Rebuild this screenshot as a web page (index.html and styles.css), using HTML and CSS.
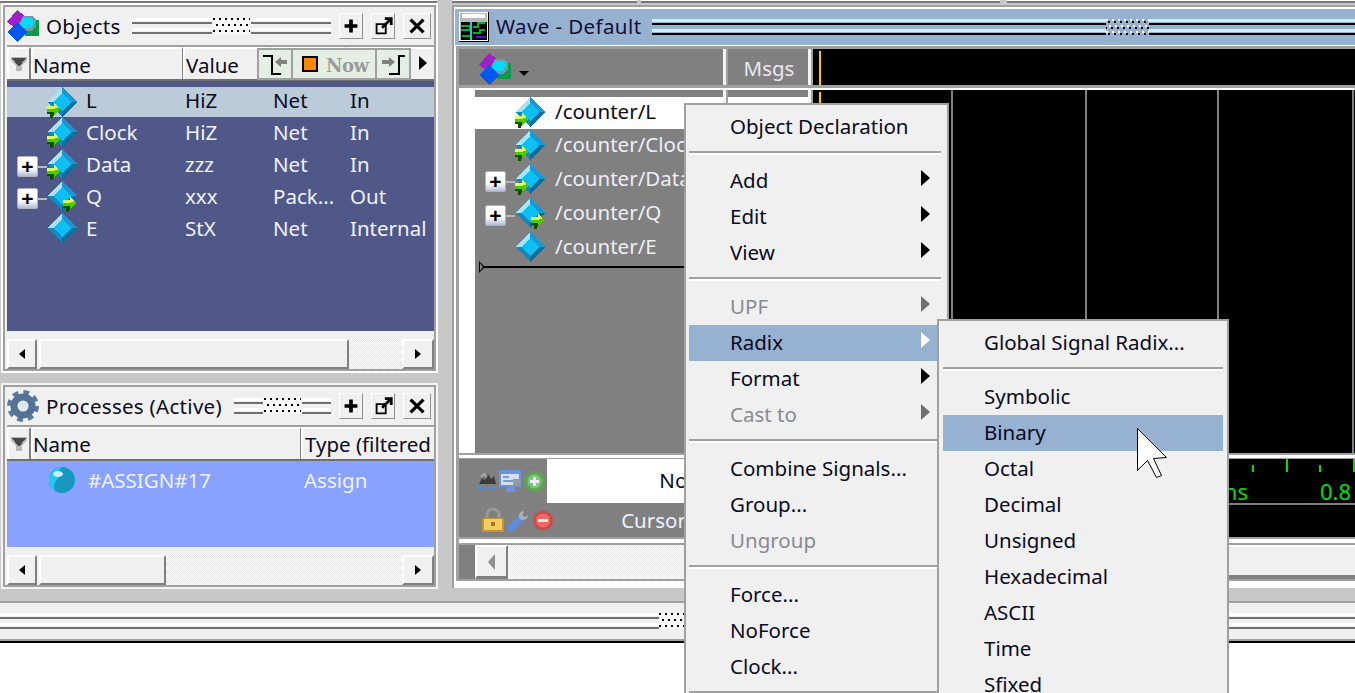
FILE: index.html
```html
<!DOCTYPE html>
<html lang="en">
<head>
  <meta charset="UTF-8" />
  <title>Wave - Default</title>
  <link rel="stylesheet" href="styles.css">
</head>
<body>

  <svg class="defs" aria-hidden="true">
    <symbol id="net" viewBox="0 0 30 30">
      <polygon points="15,0 0,15 15,15" fill="#a6e4f8"/>
      <polygon points="15,0 30,15 15,15" fill="#169ad6"/>
      <polygon points="30,15 15,30 15,15" fill="#07709e"/>
      <polygon points="0,15 15,30 15,15" fill="#1488bc"/>
      <polygon points="15,6 24,15 15,24 6,15" fill="#0cc0f6"/>
    </symbol>
    <symbol id="arrow" viewBox="0 0 14 15">
      <polygon points="0,3 7,3 7,0 14,6 7,12 7,9 0,9" fill="#50c800"/>
      <polygon points="0,3 7,3 7,0 12,4 7,6 0,6" fill="#d8ff60"/>
      <polygon points="0,9 7,9 7,12 6,13 6,15 3,15 3,11 0,11" fill="#0c5000"/>
    </symbol>
    <symbol id="objects" viewBox="0 0 32 32">
      <polygon points="0,12 10,0 18,6 8,18" fill="#a020c8"/>
      <rect x="18" y="10" width="14" height="16" fill="#0f9a48"/>
      <polygon points="16,6 26,6 29,10 29,17 24,21 14,21 11,16" fill="#6c9aa8"/>
      <polygon points="16,8 25,8 27,12 24,18 15,18 13,14" fill="#00dcff"/>
      <polygon points="10,12 20,22 10,32 0,22" fill="#0058f0"/>
    </symbol>
    <symbol id="plus" viewBox="0 0 24 26">
      <path d="M12 6v14M5 13h14" stroke="#000" stroke-width="4" fill="none"/>
    </symbol>
    <symbol id="popout" viewBox="0 0 24 26">
      <path d="M5 11h10v10H5z" stroke="#000" stroke-width="2" fill="none"/>
      <path d="M11 15l9-9M14 5h7v7" stroke="#000" stroke-width="3" fill="none"/>
    </symbol>
    <symbol id="close" viewBox="0 0 28 26">
      <path d="M7 6l14 14M21 6L7 20" stroke="#000" stroke-width="3.5" fill="none"/>
    </symbol>
    <symbol id="filter" viewBox="0 0 16 14">
      <polygon points="0,0 16,0 16,3 11,9 11,14 5,14 5,9 0,3" fill="#b8b8b8"/>
      <polygon points="1,1 15,1 8,10" fill="#484848"/>
    </symbol>
  </svg>

  <div class="topline">
    <div class="seg seg-left"></div>
    <div class="seg seg-mid"></div>
    <div class="seg seg-wide"></div>
    <div class="seg seg-last"></div>
  </div>

  <div class="workspace">
    <div class="left-col">

      <section class="pane pane-objects">
        <div class="pane-title">
          <svg class="title-icon"><use href="#objects"/></svg>
          <span class="title-text">Objects</span>
          <div class="grip grip-objects"><i class="grip-lines"></i><i class="grip-dots"></i><i class="grip-lines"></i></div>
          <div class="title-btns">
            <button class="bevel-btn"><svg><use href="#plus"/></svg></button>
            <button class="bevel-btn"><svg><use href="#popout"/></svg></button>
            <button class="bevel-btn btn-close"><svg><use href="#close"/></svg></button>
          </div>
        </div>
        <div class="col-head">
          <div class="col col-filter"><svg class="filter-icon"><use href="#filter"/></svg></div>
          <div class="col col-name">Name</div>
          <div class="col col-value">Value</div>
          <div class="col col-kind"></div>
          <div class="col col-rest"></div>
          <div class="now-tools">
            <div class="tool">
              <svg width="24" height="20" viewBox="0 0 24 20"><path d="M0 1h9v18h9" stroke="#000" stroke-width="2" fill="none"/><polygon points="12,7 18,2 18,5 24,5 24,9 18,9 18,12" fill="#808080"/></svg>
            </div>
            <div class="tool tool-now"><span class="now-box"></span><span class="now-label">Now</span></div>
            <div class="tool">
              <svg width="24" height="20" viewBox="0 0 24 20"><path d="M24 1h-6v18H8" stroke="#000" stroke-width="2" fill="none"/><polygon points="14,7 8,2 8,5 1,5 1,9 8,9 8,12" fill="#808080"/></svg>
            </div>
          </div>
          <span class="head-more"></span>
        </div>
        <div class="obj-list">
          <div class="obj-row obj-first selected">
            <div class="tree"><svg class="net"><use href="#net"/></svg><svg class="arrow-in"><use href="#arrow"/></svg></div>
            <span class="name">L</span><span class="val">HiZ</span><span class="kind">Net</span><span>In</span>
          </div>
          <div class="obj-row">
            <div class="tree"><svg class="net"><use href="#net"/></svg><svg class="arrow-in"><use href="#arrow"/></svg></div>
            <span class="name">Clock</span><span class="val">HiZ</span><span class="kind">Net</span><span>In</span>
          </div>
          <div class="obj-row">
            <div class="tree has-exp"><span class="exp">+</span><i class="exp-line"></i><svg class="net"><use href="#net"/></svg><svg class="arrow-in arrow-exp"><use href="#arrow"/></svg></div>
            <span class="name">Data</span><span class="val">zzz</span><span class="kind">Net</span><span>In</span>
          </div>
          <div class="obj-row">
            <div class="tree has-exp"><span class="exp">+</span><i class="exp-line"></i><svg class="net"><use href="#net"/></svg><svg class="arrow-out arrow-exp"><use href="#arrow"/></svg></div>
            <span class="name">Q</span><span class="val">xxx</span><span class="kind">Pack...</span><span>Out</span>
          </div>
          <div class="obj-row">
            <div class="tree"><svg class="net"><use href="#net"/></svg></div>
            <span class="name">E</span><span class="val">StX</span><span class="kind">Net</span><span>Internal</span>
          </div>
        </div>
        <div class="scroll">
          <button class="scroll-btn"><i class="tri-left"></i></button>
          <div class="thumb thumb-objects"></div>
          <div class="trough"></div>
          <button class="scroll-btn"><i class="tri-right"></i></button>
        </div>
      </section>

      <section class="pane pane-procs">
        <div class="pane-title">
          <svg class="title-icon" viewBox="0 0 32 32">
            <circle cx="16" cy="16" r="13.5" fill="none" stroke="#5a7a9c" stroke-width="5" stroke-dasharray="5.6 5"/>
            <circle cx="16" cy="16" r="9" fill="none" stroke="#527396" stroke-width="7"/>
            <circle cx="16" cy="16" r="4.5" fill="#dfe6ee"/>
          </svg>
          <span class="title-text">Processes (Active)</span>
          <div class="grip grip-procs"><i class="grip-lines"></i><i class="grip-dots"></i><i class="grip-lines"></i></div>
          <div class="title-btns">
            <button class="bevel-btn"><svg><use href="#plus"/></svg></button>
            <button class="bevel-btn"><svg><use href="#popout"/></svg></button>
            <button class="bevel-btn btn-close"><svg><use href="#close"/></svg></button>
          </div>
        </div>
        <div class="col-head">
          <div class="col col-filter"><svg class="filter-icon"><use href="#filter"/></svg></div>
          <div class="col col-pname">Name</div>
          <div class="col col-type">Type (filtered</div>
        </div>
        <div class="proc-list">
          <div class="proc-row">
            <svg class="proc-icon" viewBox="0 0 26 26">
              <circle cx="13" cy="13" r="13" fill="#1898c0"/>
              <path d="M13 0a13 13 0 0 0-13 13 13 13 0 0 0 6 11 13 13 0 0 1 3-13 12 12 0 0 1 4-11z" fill="#22c8f4"/>
              <ellipse cx="9" cy="7" rx="5" ry="3" fill="#c8f2ff"/>
            </svg>
            <span class="proc-name">#ASSIGN#17</span>
            <span>Assign</span>
          </div>
        </div>
        <div class="scroll">
          <button class="scroll-btn"><i class="tri-left"></i></button>
          <div class="thumb thumb-procs"></div>
          <div class="trough"></div>
          <button class="scroll-btn"><i class="tri-right"></i></button>
        </div>
      </section>
    </div>

    <section class="wave-pane">
      <div class="wave-title">
        <svg class="wave-icon" viewBox="0 0 30 30">
          <rect width="30" height="30" fill="#000"/>
          <rect width="29" height="29" fill="#fff"/>
          <rect x="1" y="1" width="27" height="27" fill="#b8b8b8"/>
          <rect x="3" y="2" width="23" height="4" fill="#fff"/>
          <rect x="2" y="10" width="26" height="18" fill="#000"/>
          <path d="M2 14h9v4H2M14 15h5v-4h7M14 21h7v-3h5M3 24h8" stroke="#00b030" stroke-width="2" fill="none"/>
          <rect x="11" y="10" width="2" height="18" fill="#10d0d0"/>
          <rect x="17" y="24" width="10" height="2" fill="#5010d0"/>
        </svg>
        <span class="title-text wave-title-text">Wave - Default</span>
        <div class="grip grip-wave"><i class="grip-lines grip-first"></i><i class="grip-dots"></i><i class="grip-lines"></i></div>
      </div>

      <div class="wave-body">
        <div class="wave-head">
          <div class="head-names">
            <svg class="head-icon"><use href="#objects"/></svg>
            <i class="caret"></i>
          </div>
          <i class="split"></i>
          <div class="head-msgs">Msgs</div>
          <i class="split"></i>
          <div class="head-wave"></div>
        </div>
        <div class="hsplit"></div>

        <div class="wave-main">
          <div class="sig-gutter"></div>
          <div class="sig-list">
            <div class="sig-row sig-first">
              <div class="sig-tree"><svg class="net"><use href="#net"/></svg><svg class="arrow-in"><use href="#arrow"/></svg></div>
              <span>/counter/L</span>
            </div>
            <div class="sig-row">
              <div class="sig-tree"><svg class="net"><use href="#net"/></svg><svg class="arrow-in"><use href="#arrow"/></svg></div>
              <span>/counter/Clock</span>
            </div>
            <div class="sig-row">
              <div class="sig-tree has-exp"><span class="exp">+</span><i class="exp-line"></i><svg class="net"><use href="#net"/></svg><svg class="arrow-in arrow-exp"><use href="#arrow"/></svg></div>
              <span>/counter/Data</span>
            </div>
            <div class="sig-row">
              <div class="sig-tree has-exp"><span class="exp">+</span><i class="exp-line"></i><svg class="net"><use href="#net"/></svg><svg class="arrow-out arrow-exp"><use href="#arrow"/></svg></div>
              <span>/counter/Q</span>
            </div>
            <div class="sig-row">
              <div class="sig-tree"><svg class="net"><use href="#net"/></svg></div>
              <span>/counter/E</span>
            </div>
            <div class="insert-line"></div>
          </div>
          <i class="split"></i>
          <div class="msg-col"></div>
          <i class="split"></i>
          <div class="wave-canvas">
            <div class="grid-col grid-a"></div>
            <div class="grid-col grid-b"></div>
            <div class="grid-col grid-c"></div>
            <div class="grid-col grid-d"></div>
          </div>
        </div>
        <div class="hsplit hsplit-low"></div>

        <div class="now-row">
          <div class="now-icons">
            <svg width="20" height="20" viewBox="0 0 20 20">
              <path d="M2 13l3-6 3 2 3-6 3 5 3-3 2 8z" fill="#3c3c3c"/><path d="M4 6l3-3 3 3" stroke="#aaa" stroke-width="2" fill="none"/>
              <path d="M1 17h18M1 17l3-2M1 17l3 2M19 17l-3-2M19 17l-3 2" stroke="#4a90e0" stroke-width="1.5" fill="none"/>
            </svg>
            <svg width="23" height="22" viewBox="0 0 23 22">
              <rect width="22" height="17" fill="#6c94d8"/><rect x="2" y="4" width="18" height="11" fill="#d4deec"/>
              <path d="M4 7h6M4 11h10" stroke="#7c9ccc" stroke-width="2"/><rect x="14" y="9" width="7" height="6" fill="#999"/><rect x="7" y="17" width="9" height="5" fill="#6c94d8"/>
            </svg>
            <svg width="21" height="21" viewBox="0 0 21 21">
              <circle cx="10.5" cy="10.5" r="10.5" fill="#5aa452"/><circle cx="10.5" cy="10.5" r="7" fill="#7cc874"/>
              <path d="M10.5 6v9M6 10.5h9" stroke="#eef" stroke-width="3"/>
            </svg>
          </div>
          <div class="now-value">Now</div>
          <i class="split"></i>
          <div class="msg-col"></div>
          <i class="split"></i>
          <div class="timeline">
            <span class="tick-label label-a">0.6 ns</span>
            <span class="tick-label label-b">0.8</span>
          </div>
        </div>

        <div class="cursor-row">
          <div class="cursor-icons">
            <svg width="22" height="24" viewBox="0 0 22 24">
              <path d="M5 11V6a6 5 0 0 1 12 0v5" stroke="#999" stroke-width="3" fill="none"/>
              <rect y="10" width="22" height="14" fill="#c89430"/><rect x="2" y="11" width="18" height="11" fill="#f4cc60"/><rect x="9" y="14" width="4" height="4" fill="#a07820"/>
            </svg>
            <svg width="23" height="23" viewBox="0 0 23 23">
              <path d="M3 20L13 10" stroke="#5c8ce0" stroke-width="7" stroke-linecap="round"/>
              <path d="M13 10a5 5 0 0 1 3-8l1 1-2 3 3 2 3-2a5 5 0 0 1-8 4z" fill="#b0b0b0"/>
            </svg>
            <svg width="20" height="21" viewBox="0 0 20 21">
              <circle cx="10" cy="10.5" r="10" fill="#c84c48"/><circle cx="10" cy="10.5" r="7" fill="#f06a64"/><rect x="5" y="9" width="10" height="3" fill="#ffe8e8"/>
            </svg>
          </div>
          <div class="cursor-label">Cursor 1</div>
          <i class="split"></i>
          <div class="msg-col msg-grey"></div>
          <i class="split"></i>
          <div class="cursor-wave"></div>
        </div>
        <div class="hsplit hsplit-scroll"></div>

        <div class="wave-scroll">
          <div class="wave-scroll-pad"></div>
          <button class="scroll-btn wave-scroll-btn"><i class="tri-left tri-off"></i></button>
          <div class="trough wave-trough"></div>
          <div class="thumb wave-thumb"></div>
        </div>
      </div>
    </section>
  </div>

  <div class="status-grip">
    <div class="grip"><i class="grip-lines"></i><i class="grip-dots"></i><i class="grip-lines"></i></div>
  </div>
  <div class="status-white"></div>

  <!-- context menu -->
  <nav class="menu menu-main">
    <div class="menu-item">Object Declaration</div>
    <div class="menu-sep"></div>
    <div class="menu-item">Add<i class="sub-arrow"></i></div>
    <div class="menu-item">Edit<i class="sub-arrow"></i></div>
    <div class="menu-item">View<i class="sub-arrow"></i></div>
    <div class="menu-sep"></div>
    <div class="menu-item disabled">UPF<i class="sub-arrow"></i></div>
    <div class="menu-item active">Radix<i class="sub-arrow"></i></div>
    <div class="menu-item">Format<i class="sub-arrow"></i></div>
    <div class="menu-item disabled">Cast to<i class="sub-arrow"></i></div>
    <div class="menu-sep"></div>
    <div class="menu-item">Combine Signals...</div>
    <div class="menu-item">Group...</div>
    <div class="menu-item disabled">Ungroup</div>
    <div class="menu-sep"></div>
    <div class="menu-item">Force...</div>
    <div class="menu-item">NoForce</div>
    <div class="menu-item">Clock...</div>
    <div class="menu-sep"></div>
  </nav>

  <nav class="menu menu-radix">
    <div class="menu-item">Global Signal Radix...</div>
    <div class="menu-sep"></div>
    <div class="menu-item">Symbolic</div>
    <div class="menu-item active">Binary</div>
    <div class="menu-item">Octal</div>
    <div class="menu-item">Decimal</div>
    <div class="menu-item">Unsigned</div>
    <div class="menu-item">Hexadecimal</div>
    <div class="menu-item">ASCII</div>
    <div class="menu-item">Time</div>
    <div class="menu-item">Sfixed</div>
  </nav>

  <svg class="mouse" width="31" height="51" viewBox="0 0 31 51">
    <polygon points="0.5,0.5 29.5,29.5 16.5,30.5 24.5,47.5 19.5,49.5 10.5,32.5 0.5,42.5" fill="#fff" stroke="#000"/>
  </svg>

</body>
</html>
```

FILE: styles.css
```css
* {
  box-sizing: border-box;
}

html, body {
  margin: 0;
  padding: 0;
}

body {
  position: relative;
  width: 1355px;
  height: 693px;
  overflow: hidden;
  background-color: #c8c8c8;
  color: #0a0a20;
  font-family: 'Noto Sans', 'Open Sans', sans-serif;
  font-size: 20.5px;
  line-height: 1;
}

i {
  display: block;
  font-style: normal;
}

button {
  padding: 0;
  font: inherit;
}

svg {
  flex: none;
}

.defs {
  position: absolute;
  width: 0;
  height: 0;
}

/* top edge */
.topline {
  display: flex;
  height: 3px;
}

.seg {
  background-color: #fff;
  border-bottom: 2px solid #777;
}

.seg-left { width: 437px; margin-right: 15px; }
.seg-mid { width: 185px; margin-right: 4px; }
.seg-wide { width: 359px; margin-right: 7px; }
.seg-last { width: 348px; }

.workspace {
  display: flex;
  height: 598px;
  padding-top: 2px;
}

.left-col {
  flex: none;
  width: 452px;
  padding-left: 3px;
}

/* docked panes */
.pane {
  display: flex;
  flex-direction: column;
  width: 433px;
  padding: 0 0 0 2px;
  border: 2px solid #a0a0a0;
  outline: 2px solid #fff;
  background-color: #f0f0f0;
}

.pane-objects { height: 366px; }
.pane-procs { height: 202px; margin-top: 14px; outline-color: #f4f4f4; }

.pane-title {
  display: flex;
  flex: none;
  align-items: center;
  height: 38px;
}

.title-icon {
  flex: none;
  width: 32px;
  height: 32px;
  shape-rendering: crispEdges;
}

.pane-procs .title-icon { shape-rendering: auto; }

.title-text {
  margin-left: 7px;
  letter-spacing: 0.3px;
  white-space: nowrap;
}

.title-btns {
  display: flex;
  gap: 8px;
  margin: 0 3px 0 8px;
}

.bevel-btn {
  width: 24px;
  height: 26px;
  border: 1px solid;
  border-color: #fff #909090 #909090 #fff;
  background-color: #f0f0f0;
}

.bevel-btn svg {
  display: block;
  width: 22px;
  height: 24px;
}

.btn-close { width: 28px; }
.btn-close svg { width: 26px; }

/* dotted drag handle */
.grip {
  display: flex;
  flex: 1;
  align-items: stretch;
  height: 16px;
}

.grip-lines {
  flex: 1;
  background: linear-gradient(#fff 0 3px, #f0f0f0 3px 4px, #707070 4px 6px, #f0f0f0 6px 10px, #fff 10px 13px, #f0f0f0 13px 14px, #707070 14px 16px);
}

.grip-dots {
  flex: none;
  width: 37px;
  background:
    conic-gradient(at 2px 2px, transparent 75%, #000 0) 0 0 / 6px 12px,
    conic-gradient(at 2px 2px, transparent 75%, #000 0) 3px 6px / 6px 12px,
    #f8f8f8;
}

.grip-objects { margin-left: 11px; }
.grip-objects .grip-dots { margin: 0 1px; }
.grip-procs { margin-left: 12px; }
.grip-procs .grip-dots { margin: 0 1px; }

/* column header */
.col-head {
  position: relative;
  display: flex;
  flex: none;
  height: 36px;
  border-top: 2px solid #a0a0a0;
  border-bottom: 2px solid #707070;
}

.col {
  display: flex;
  align-items: center;
  height: 32px;
  padding-top: 3px;
  border-top: 2px solid #fff;
  border-left: 2px solid #fff;
  border-right: 1px solid #808080;
  white-space: nowrap;
}

.col-filter { width: 24px; padding: 0 0 0 2px; border-right-width: 2px; }
.col-name { width: 152px; }
.col-value { width: 87px; padding-left: 1px; }
.col-kind { width: 76px; }
.col-rest { flex: 1; border-right: 0; }
.col-pname { width: 270px; padding-top: 1px; }
.col-type { flex: 1; border-right: 0; padding: 1px 0 0 2px; overflow: hidden; }

.filter-icon {
  width: 16px;
  height: 14px;
  shape-rendering: crispEdges;
}

.now-tools {
  position: absolute;
  top: 1px;
  left: 250px;
  display: flex;
  width: 154px;
  height: 32px;
  border: 2px solid #a0a0a0;
  background-color: #a0a0a0;
  gap: 2px;
}

.tool {
  display: flex;
  align-items: center;
  justify-content: center;
  width: 32px;
  padding-top: 1px;
  background-color: #e4eee4;
}

.tool-now {
  flex: 1;
  justify-content: flex-start;
  padding: 0 0 0 9px;
}

.now-box {
  width: 16px;
  height: 16px;
  border: 2px solid #000;
  background-color: #ff8800;
}

.now-label {
  margin-left: 8px;
  padding-top: 3px;
  color: #9a9a9a;
  font-family: 'DejaVu Serif', 'Liberation Serif', serif;
  font-size: 18px;
  font-weight: bold;
  letter-spacing: -0.5px;
}

.head-more {
  position: absolute;
  top: 9px;
  left: 412px;
  border-left: 8px solid #000;
  border-top: 7px solid transparent;
  border-bottom: 7px solid transparent;
}

/* object list */
.obj-list {
  flex: 1;
  padding-top: 6px;
  background-color: #50588a;
  color: #f0f2ff;
}

.obj-row {
  display: grid;
  grid-template-columns: 79px 99px 88px 77px auto;
  align-items: center;
  height: 32px;
  padding-bottom: 2px;
  white-space: nowrap;
}

.obj-first {
  height: 30px;
  padding-bottom: 0;
}

.obj-first > span {
  margin-top: -4px;
}

.selected {
  background-color: #bccbd9;
  color: #0a0a20;
}

.tree {
  position: relative;
  display: flex;
  align-items: center;
  padding-left: 40px;
}

.tree.has-exp { padding-left: 10px; }

.net {
  flex: none;
  width: 30px;
  height: 30px;
  shape-rendering: crispEdges;
}

.arrow-in,
.arrow-out {
  position: absolute;
  top: 16px;
  width: 14px;
  height: 15px;
  shape-rendering: crispEdges;
}

.tree .arrow-in { left: 40px; }
.tree .arrow-out { left: 56px; }

.exp {
  display: flex;
  flex: none;
  align-items: center;
  justify-content: center;
  width: 21px;
  height: 21px;
  margin-top: 5px;
  border-radius: 2px;
  border: 1px solid #b0b0c4;
  background: linear-gradient(#fff 60%, #b4bcd8);
  color: #000;
  font-family: 'Liberation Sans', sans-serif;
  font-size: 21px;
  font-weight: bold;
}

.exp-line {
  flex: none;
  width: 9px;
  height: 2px;
  margin-top: 5px;
  background-color: #b8b8b8;
}

/* scrollbars */
.scroll {
  display: flex;
  flex: none;
  height: 30px;
  margin-top: 8px;
}

.scroll-btn {
  display: flex;
  flex: none;
  align-items: center;
  justify-content: center;
  width: 30px;
  border: 2px solid;
  border-color: #fff #808080 #808080 #fff;
  background-color: #f0f0f0;
}

.scroll .scroll-btn:last-child { width: 32px; }

.thumb {
  flex: none;
  margin-left: 2px;
  border: 2px solid;
  border-color: #fff #808080 #808080 #fff;
  background-color: #f0f0f0;
}

.thumb-objects { width: 310px; }
.thumb-procs { width: 127px; }

.trough {
  flex: 1;
  background: repeating-conic-gradient(#e8e8e8 0 25%, #fff 0 50%) 0 0 / 2px 2px;
}

.tri-left,
.tri-right {
  border-top: 5px solid transparent;
  border-bottom: 5px solid transparent;
}

.tri-left { border-right: 6px solid #000; }
.tri-right { border-left: 6px solid #000; }
.tri-off { border-right: 7px solid #909090; border-top-width: 8px; border-bottom-width: 8px; }

/* process list */
.proc-list {
  flex: 1;
  background-color: #8aa2ff;
  color: #f0f2ff;
}

.proc-row {
  display: flex;
  align-items: center;
  height: 40px;
  padding-bottom: 2px;
  white-space: nowrap;
}

.proc-icon {
  flex: none;
  width: 26px;
  height: 26px;
  margin-left: 42px;
}

.proc-name {
  width: 216px;
  margin-left: 13px;
}

/* wave window */
.wave-pane {
  flex: 1;
  height: 583px;
  min-width: 0;
  padding: 2px 0 0 1px;
  border-left: 2px solid #a0a0a0;
  border-top: 2px solid #a0a0a0;
  background-color: #fff;
  overflow: hidden;
}

.wave-title {
  display: flex;
  align-items: center;
  height: 36px;
  padding-left: 4px;
  background-color: #97b1d0;
}

.wave-icon {
  flex: none;
  width: 30px;
  height: 30px;
  shape-rendering: crispEdges;
}

.wave-title-text {
  margin-left: 7px;
  padding-bottom: 2px;
  color: #10103a;
  letter-spacing: 0.4px;
}

.grip-wave {
  margin-left: 11px;
  height: 16px;
}

.grip-wave .grip-lines {
  background: linear-gradient(#c8f0ff 0 3px, transparent 3px 4px, #000 4px 6px, transparent 6px 10px, #c8f0ff 10px 13px, transparent 13px 14px, #000 14px 16px);
}

.grip-wave .grip-first { flex: none; width: 454px; }

.grip-wave .grip-dots {
  width: 43px;
  background:
    conic-gradient(at 2px 2px, transparent 75%, #000 0) 2px 2px / 6px 12px,
    conic-gradient(at 2px 2px, transparent 75%, #000 0) 5px 8px / 6px 12px,
    conic-gradient(at 2px 2px, transparent 75%, #fff 0) 0 0 / 6px 12px,
    conic-gradient(at 2px 2px, transparent 75%, #fff 0) 3px 6px / 6px 12px;
}

.wave-body {
  display: flex;
  flex-direction: column;
  margin: 1px 0 0 1px;
  border-top: 3px solid #a0a0a0;
  border-left: 3px solid #a0a0a0;
  border-bottom: 2px solid #a0a0a0;
  background-color: #808080;
}

.wave-head,
.wave-main,
.now-row,
.cursor-row,
.wave-scroll {
  display: flex;
  flex: none;
}

.wave-head { height: 36px; }
.wave-main { height: 363px; }
.now-row { height: 44px; }
.cursor-row { height: 34px; }
.wave-scroll { height: 34px; }

.split {
  flex: none;
  width: 5px;
  border-left: 3px solid #f4f4f4;
  border-right: 2px solid #a0a0a0;
  background-color: #f4f4f4;
}

.head-names {
  display: flex;
  flex: none;
  align-items: flex-end;
  width: 264px;
  padding-left: 20px;
}

.head-icon {
  width: 32px;
  height: 32px;
  shape-rendering: crispEdges;
}

.caret {
  margin: 0 0 9px 8px;
  border-top: 5px solid #000;
  border-left: 5px solid transparent;
  border-right: 5px solid transparent;
}

.head-msgs {
  display: flex;
  flex: none;
  align-items: center;
  justify-content: center;
  width: 80px;
  padding: 3px 0 0 2px;
  color: #e8e8f0;
}

.head-wave {
  position: relative;
  flex: 1;
  background-color: #000;
}

.head-wave::before,
.grid-a::before {
  content: "";
  position: absolute;
  top: 2px;
  bottom: 0;
  left: 6px;
  width: 2px;
  background-color: #ffc800;
}

.hsplit {
  flex: none;
  height: 5px;
  border-top: 3px solid #a0a0a0;
  background-color: #fff;
}

.hsplit-low { height: 6px; border-top-width: 2px; border-bottom: 1px solid #a0a0a0; }
.hsplit-scroll { height: 8px; border-top: 2px solid #a0a0a0; border-bottom: 2px solid #a0a0a0; }

/* signal names */
.sig-gutter {
  flex: none;
  width: 16px;
  background-color: #fff;
}

.sig-list {
  flex: none;
  width: 248px;
  padding-top: 7px;
  background-color: #808080;
  color: #eeeef6;
}

.sig-row {
  display: flex;
  align-items: center;
  height: 34px;
  padding-bottom: 2px;
  white-space: nowrap;
}

.sig-row > span {
  margin-top: -2px;
}

.sig-first {
  height: 32px;
  padding-bottom: 2px;
  background-color: #fff;
  color: #0a0a20;
}

.sig-tree {
  position: relative;
  display: flex;
  flex: none;
  align-items: center;
  width: 80px;
  padding-left: 40px;
}

.sig-tree.has-exp { padding-left: 10px; }
.sig-tree .arrow-in { left: 40px; }
.sig-tree .arrow-out { left: 56px; }

.insert-line {
  position: relative;
  height: 2px;
  margin: 1px 0 0 9px;
  background-color: #000;
}

.insert-line::before,
.insert-line::after {
  content: "";
  position: absolute;
  border-left: 6px solid #000;
  border-top: 6px solid transparent;
  border-bottom: 6px solid transparent;
  top: -5px;
  left: -5px;
}

.insert-line::after {
  top: -3px;
  left: -4px;
  border-left: 3px solid #808080;
  border-top-width: 4px;
  border-bottom-width: 4px;
}

.msg-col {
  flex: none;
  width: 80px;
  border-top: 7px solid #808080;
  background-color: #fff;
}

.now-row .msg-col { border-top: 0; }
.msg-grey { background-color: #808080; }

/* wave area */
.wave-canvas {
  display: flex;
  flex: 1;
  background-color: #000;
}

.grid-col {
  position: relative;
  flex: none;
  border-right: 2px solid #808080;
}

.grid-a { width: 140px; }
.grid-b { width: 134px; }
.grid-c { width: 132px; }
.grid-d { width: 135px; }

.now-value,
.cursor-label {
  flex: none;
  width: 176px;
  padding-right: 20px;
  text-align: right;
  white-space: nowrap;
}

.now-value {
  align-self: stretch;
  padding-top: 11px;
  background-color: #fff;
  color: #0a0a20;
}

.cursor-label {
  padding-top: 7px;
  color: #f0f2ff;
}

.now-icons,
.cursor-icons {
  display: flex;
  flex: none;
  align-items: center;
  width: 88px;
}

.now-icons {
  gap: 2px;
  padding-left: 18px;
}

.cursor-icons {
  gap: 3px;
  padding-left: 23px;
}

.timeline {
  position: relative;
  flex: 1;
  background:
    linear-gradient(90deg, #00e000 2px, transparent 2px) 4px 0 / 67px 13px repeat-x,
    linear-gradient(90deg, #00e000 2px, transparent 2px) 37px 6px / 67px 7px repeat-x,
    #000;
}

.tick-label {
  position: absolute;
  top: 21px;
  color: #00e000;
  font-size: 22px;
  white-space: nowrap;
}

.label-a { left: 374px; }
.label-b { left: 507px; }

.cursor-wave {
  flex: 1;
  border-top: 2px solid #808080;
  background-color: #000;
}

/* bottom scrollbar */
.wave-scroll-pad {
  flex: none;
  width: 16px;
}

.wave-scroll-btn {
  width: 33px;
  border-bottom-width: 3px;
}

.wave-trough {
  flex: none;
  width: 640px;
}

.wave-thumb {
  flex: 1;
  margin: 0;
  border-width: 2px 0 4px;
}

/* status grip */
.status-grip {
  display: flex;
  align-items: center;
  height: 40px;
  border-top: 2px solid #a0a0a0;
  border-bottom: 2px solid #a0a0a0;
  background-color: #f0f0f0;
}

.status-grip .grip .grip-lines:first-child {
  flex: none;
  width: 659px;
}

.status-white {
  height: 52px;
  border-top: 2px solid #000;
  background-color: #fff;
}

/* menus */
.menu {
  position: absolute;
  overflow: hidden;
  border: 2px solid #a0a0a0;
  background-color: #f0f0f0;
}

.menu-main {
  top: 103px;
  left: 684px;
  width: 265px;
  height: 600px;
  padding: 4px 6px 0 3px;
}

.menu-radix {
  top: 319px;
  left: 937px;
  width: 292px;
  height: 384px;
  padding: 4px 4px 0;
}

.menu-item {
  position: relative;
  height: 36px;
  padding-left: 41px;
  line-height: 34px;
  white-space: nowrap;
}

.menu-item.active {
  background-color: #97b1d0;
}

.menu-item.disabled {
  color: #8a8a92;
}

.menu-sep {
  height: 4px;
  margin: 6px 0 8px;
  border-top: 2px solid #a0a0a0;
  border-bottom: 2px solid #fff;
}

.sub-arrow {
  position: absolute;
  top: 7px;
  left: 232px;
  border-left: 9px solid #000;
  border-top: 8px solid transparent;
  border-bottom: 8px solid transparent;
}

.disabled .sub-arrow { border-left-color: #707070; }
.active .sub-arrow { border-left-color: #fff; }

.mouse {
  position: absolute;
  top: 428px;
  left: 1137px;
}
```
